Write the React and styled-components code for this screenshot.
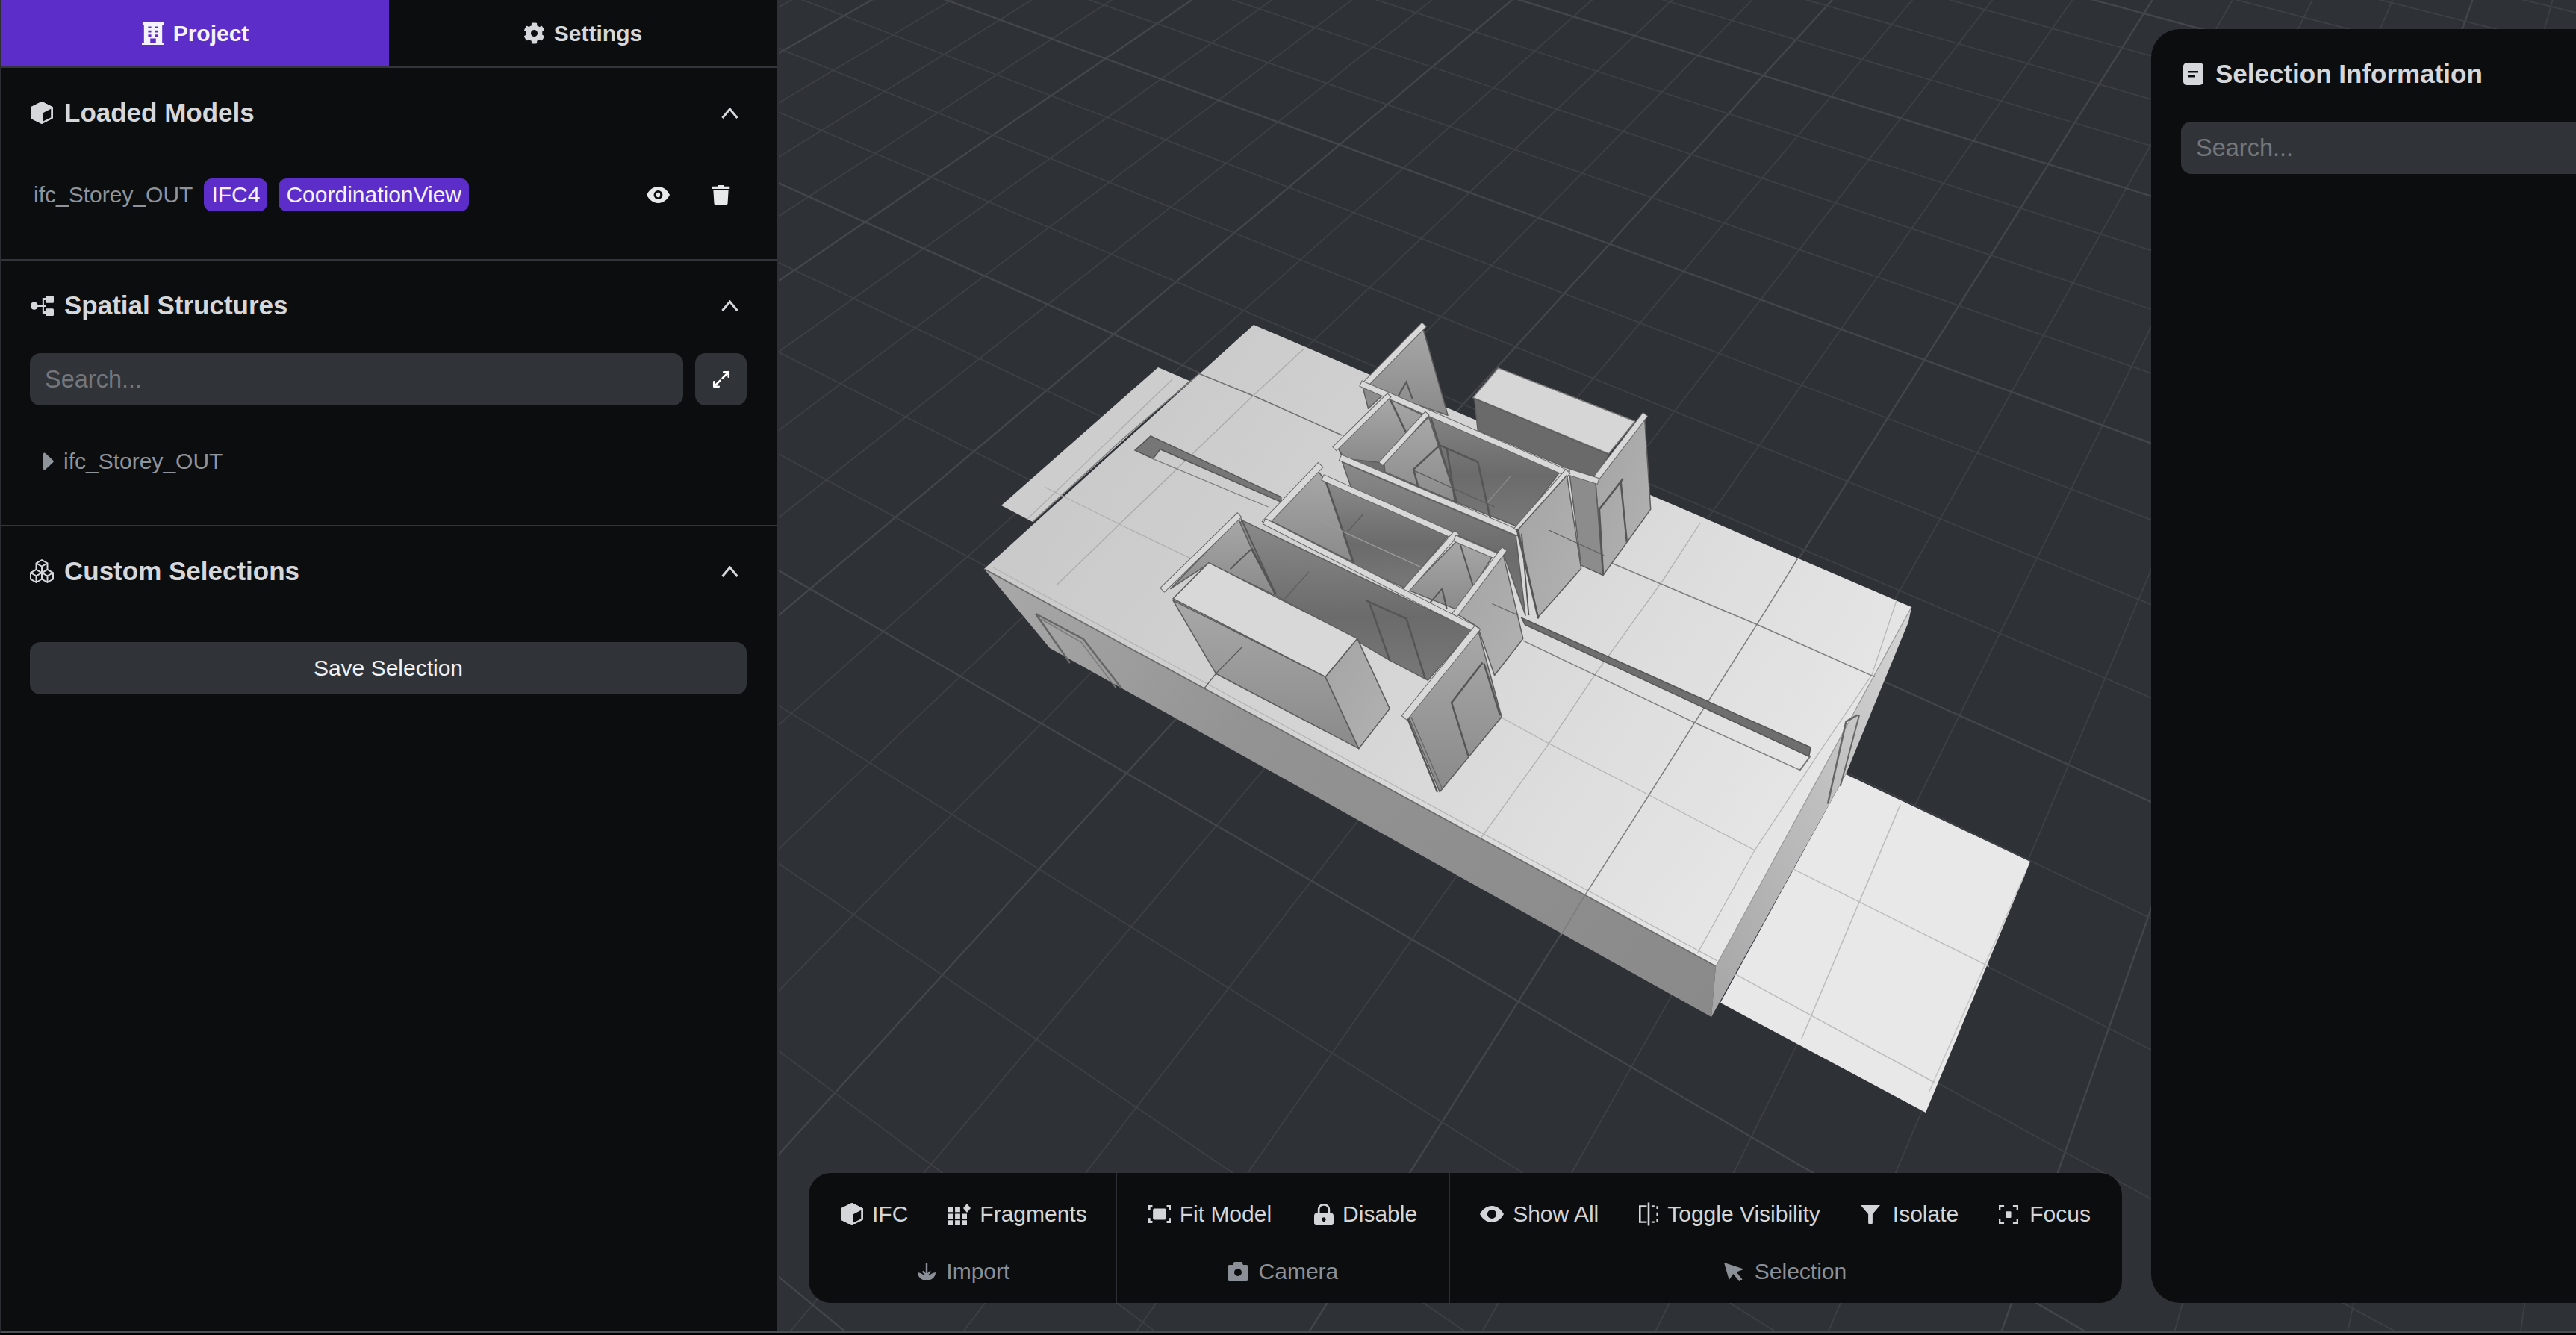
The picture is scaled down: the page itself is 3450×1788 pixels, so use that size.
import React from 'react';
import styled, { createGlobalStyle } from 'styled-components';
import { FaCog, FaTrash } from 'react-icons/fa';
import { BsBoxes } from 'react-icons/bs';

const Global = createGlobalStyle`
  html, body { margin: 0; padding: 0; background: #000; overflow: hidden; }
  * { box-sizing: border-box; }
  input::placeholder { color: #74777c; opacity: 1; }
`;

const Frame = styled.div`
  width: 3450px; height: 1785px; display: flex;
  background: #2e3136; border-bottom: 2px solid #4c4f54; border-left: 2px solid #2c2e33;
  font-family: "Liberation Sans", Arial, sans-serif; font-size: 30px; overflow: hidden;
`;
const Sidebar = styled.aside`
  width: 1041px; flex: none; height: 100%; background: #0c0d0f; border-right: 3px solid #2e3136;
  display: flex; flex-direction: column; position: relative; z-index: 2;
`;
const Tabs = styled.div`display: flex; height: 91px; flex: none; border-bottom: 2px solid #33353b;`;
const Tab = styled.div`
  flex: 1; display: flex; align-items: center; justify-content: center; gap: 12px;
  font-weight: 700; font-size: 30px;
  background: ${p => (p.$active ? '#5c2dc9' : 'transparent')};
  color: ${p => (p.$active ? '#f4f2fb' : '#d5d7da')};
`;
const Section = styled.section`
  padding: 39px 40px ${p => p.$bottom}px 38px;
  border-bottom: ${p => (p.$last ? 'none' : '2px solid #33353b')};
`;
const SectionHeader = styled.div`
  display: flex; align-items: center; height: 42px; color: #d5d7da;
`;
const HeadIcon = styled.span`
  width: 32px; margin-right: 14px; display: flex; align-items: center; justify-content: center; flex: none; color: #d5d7da;
`;
const Title = styled.h2`margin: 0; flex: 1; font-size: 35px; font-weight: 700; line-height: 42px;`;
const Chevron = styled.span`width: 46px; height: 42px; display: flex; align-items: center; justify-content: center; color: #d5d7da;`;
const ModelRow = styled.div`display: flex; align-items: center; height: 44px; margin-top: 67px; padding-left: 5px; gap: 15px;`;
const ModelName = styled.span`color: #8f949b;`;
const Badge = styled.span`
  height: 44px; display: flex; align-items: center; padding: 0 10px; border-radius: 11px;
  background: #5c2dc9; color: #f4f2fb;
`;
const RowActions = styled.div`margin-left: auto; display: flex; gap: 15px;`;
const IconAction = styled.button`
  width: 69px; height: 44px; border: 0; background: transparent; padding: 0; color: #e8e9eb;
  display: flex; align-items: center; justify-content: center;
`;
const SearchRow = styled.div`display: flex; gap: 16px; margin-top: 43px;`;
const SearchInput = styled.input`
  flex: 1; min-width: 0; height: 70px; border: 0; outline: 0; border-radius: 14px; background: #303338;
  padding: 0 20px; font: 32.5px "Liberation Sans", Arial, sans-serif; color: #d5d7da;
`;
const SquareButton = styled.button`
  width: 69px; height: 70px; flex: none; border: 0; padding: 0; border-radius: 14px; background: #303338; color: #fff;
  display: flex; align-items: center; justify-content: center;
`;
const TreeRow = styled.div`display: flex; align-items: center; gap: 13px; height: 40px; margin-top: 55px; padding-left: 17px; color: #8f949b;`;
const SaveButton = styled.button`
  width: 100%; height: 70px; margin-top: 74px; border: 0; border-radius: 14px; background: #303338;
  color: #f0f1f2; font: 30px "Liberation Sans", Arial, sans-serif;
`;
const Viewport = styled.main`flex: 1; position: relative; overflow: hidden; min-width: 0;`;
const Drawing = styled.svg`
  position: absolute; left: 0; top: 0; display: block;
  line, polyline, polygon { vector-effect: non-scaling-stroke; }
`;
const Toolbar = styled.div`
  position: absolute; left: 40px; bottom: 38px; height: 174px; display: flex;
  background: #0c0d0f; border-radius: 30px; overflow: hidden;
`;
const Group = styled.div`
  display: flex; flex-direction: column; align-items: center; padding: 25px ${p => p.$right}px 0 ${p => p.$left}px;
  border-left: ${p => (p.$first ? 'none' : '2px solid #2c2e33')};
`;
const Buttons = styled.div`display: flex; align-items: center; height: 60px; gap: ${p => p.$gap}px;`;
const ToolButton = styled.div`display: flex; align-items: center; gap: ${p => p.$gap || 12}px; color: #d3d5d8; white-space: nowrap;`;
const GroupLabel = styled.div`display: flex; align-items: center; gap: 14px; height: 40px; margin-top: 27px; color: #8b9098;`;
const InfoPanel = styled.aside`
  position: absolute; left: 1838px; top: 39px; bottom: 38px; width: 800px; background: #0c0d0f;
  border-radius: 38px 0 0 38px; padding: 39px 40px;
`;
const InfoInput = styled(SearchInput)`width: 100%; margin-top: 43px; flex: none; display: block;`;
const Glyph = styled.svg`display: block; flex: none;`;

const I = ({ w = 30, h = 30, vb = '0 0 24 24', children }) => (
  <Glyph width={w} height={h} viewBox={vb} fill="currentColor" preserveAspectRatio="none">{children}</Glyph>
);

const BuildingIcon = () => (
  <I w={30} h={30} vb="4 1 16 22.2"><path fillRule="evenodd" d="M4.500 1h15v2.200h-1V21H20v2.200H4V21h1.500V3.200h-1zM8.500 5v2h2.200V5zM13.300 5v2h2.200V5zM8.500 9v2h2.200V9zM13.300 9v2h2.200V9zM8.500 13v2h2.200v-2zM13.300 13v2h2.200v-2zM10 17v4h4v-4z" /></I>
);
const HexIcon = () => (
  <I w={30} h={30} vb="2.300 .9 19.400 22.200">
    <path d="M12 1.800 20.800 6.800V17.200L12 22.200 3.200 17.200V6.800Z" fill="none" stroke="currentColor" strokeWidth="1.800" strokeLinejoin="round" />
    <path d="M3.200 6.800 12 1.800 20.800 6.800 12 12V22.200L3.200 17.200Z" stroke="currentColor" strokeWidth="1.500" strokeLinejoin="round" />
  </I>
);
const ChevronUp = () => (
  <Glyph width="23" height="15" viewBox="0 0 23 15" fill="none" stroke="currentColor" strokeWidth="3"><polyline points="1.500,14 11.500,2 21.500,14" /></Glyph>
);
const EyeIcon = ({ w = 31, h = 22, pupil }) => (
  <I w={w} h={h} vb=".5 3 23 18">
    <path fillRule="evenodd" d="M12 3C6.500 3 2.500 7.500 .5 12 2.500 16.500 6.500 21 12 21s9.500-4.500 11.500-9C21.500 7.500 17.500 3 12 3zM12 7a4.400 5 0 1 1 0 10 4.400 5 0 0 1 0-10z" />
    {pupil && <ellipse cx="12" cy="12" rx="2" ry="2.600" />}
  </I>
);
const TreeIcon = () => (
  <I w={31} h={27} vb=".5 3 22.500 18">
    <circle cx="4" cy="12" r="3.500" />
    <path d="M7 11h5V5h3v2h-1.500v4H15v2h-1.500v4H15v2h-3v-6H7z" />
    <rect x="15" y="3" width="8" height="6.500" rx="1" /><rect x="15" y="14.500" width="8" height="6.500" rx="1" />
  </I>
);
const ExpandIcon = () => (
  <Glyph width="26" height="26" viewBox="0 0 24 24" fill="none" stroke="currentColor" strokeWidth="2.400" strokeLinecap="round" strokeLinejoin="round">
    <path d="M15 3h6v6M21 3l-7.500 7.500M9 21H3v-6M3 21l7.500-7.500" />
  </Glyph>
);
const CaretRight = () => (
  <Glyph width="15" height="24" viewBox="0 0 15 24" fill="currentColor"><path d="M1 2.500C1 .5 2.800 0 4 1.200L14 10.500c1 1 1 2 0 3L4 22.800C2.800 24 1 23.500 1 21.500z" /></Glyph>
);
const FragmentsIcon = () => (
  <I w={30} h={29} vb="2 1.500 19.800 19.500">
    <path d="M2 4.500h4.500v4.500H2zM8 4.500h4.500v4.500H8zM2 10.500h4.500V15H2zM8 10.500h4.500V15H8zM14 10.500h4.500V15H14zM2 16.500h4.500V21H2zM8 16.500h4.500V21H8zM14 16.500h4.500V21H14z" />
    <path d="M18.500 1.500 21.800 5.500 18.500 9.500 15.200 5.500z" />
  </I>
);
const FitIcon = () => (
  <Glyph width="30" height="24" viewBox="1 4 22 16" preserveAspectRatio="none" fill="none" stroke="currentColor" strokeWidth="2">
    <path d="M5 5H2v3.500M19 5h3v3.500M5 19H2v-3.500M19 19h3v-3.500" />
    <rect x="5.500" y="7" width="13" height="10" rx="1.500" fill="currentColor" stroke="none" />
  </Glyph>
);
const LockIcon = () => (
  <I w={26} h={29} vb="2.500 1.500 19 21.500">
    <path fillRule="evenodd" d="M12 1.500c-3.500 0-6 2.500-6 6V11H5a2.500 2.500 0 0 0-2.500 2.500v7A2.500 2.500 0 0 0 5 23h14a2.500 2.500 0 0 0 2.500-2.500v-7A2.500 2.500 0 0 0 19 11h-1V7.500c0-3.500-2.500-6-6-6zM8 11V7.500c0-2.500 1.500-4 4-4s4 1.500 4 4V11zM12 15a2 2 0 0 1 1 3.700V20h-2v-1.300A2 2 0 0 1 12 15z" />
  </I>
);
const ToggleIcon = () => (
  <Glyph width="26" height="32" viewBox="2 .5 20 27" preserveAspectRatio="none" fill="none" stroke="currentColor" strokeWidth="2">
    <path d="M10 5H3v18h7M12 1v26" />
    <path d="M15 5h3M21 5v3M21 12v4M21 20v3M15 23h3" />
  </Glyph>
);
const FunnelIcon = () => (
  <I w={26} h={25} vb=".8 2.500 22.400 21"><path d="M.8 2.500h22.400L14.500 12.500V22.500c0 .8-.5 1-1.200 1h-2.600c-.7 0-1.200-.2-1.200-1V12.500z" /></I>
);
const FocusIcon = () => (
  <Glyph width="26" height="25" viewBox="1 2 22 20" preserveAspectRatio="none" fill="none" stroke="currentColor" strokeWidth="2">
    <path d="M7 3H2v4.500M17 3h5v4.500M7 21H2v-4.500M17 21h5v-4.500" />
    <rect x="9" y="8.500" width="6" height="7" rx="1" fill="currentColor" stroke="none" />
  </Glyph>
);
const ImportIcon = () => (
  <I w={24} h={24} vb="2 1 20 22">
    <path d="M2 13c2.500.5 5 1.500 7 3.500h6c2-2 4.500-3 7-3.500 0 5.500-4 10-10 10S2 18.500 2 13z" />
    <path d="M12 1v15M7.500 11.500 12 16.500l4.500-5" fill="none" stroke="currentColor" strokeWidth="2" />
  </I>
);
const CameraIcon = () => (
  <I w={28} h={26} vb="0 0 28 26">
    <path fillRule="evenodd" d="M9 0h10l2 4h4a3 3 0 0 1 3 3v16a3 3 0 0 1-3 3H3a3 3 0 0 1-3-3V7a3 3 0 0 1 3-3h4zM14 9a5 5 0 1 0 0 10 5 5 0 0 0 0-10z" />
  </I>
);
const CursorIcon = () => (
  <I w={27} h={25} vb="1 1 22 24"><path d="M1 1 23 9.500 14.500 13 21 22.500 17.500 25 11 15.500 6.500 23z" /></I>
);
const NoteIcon = () => (
  <I w={27} h={30} vb="0 0 27 30">
    <path fillRule="evenodd" d="M5 0h17a5 5 0 0 1 5 5v20a5 5 0 0 1-5 5H5a5 5 0 0 1-5-5V5a5 5 0 0 1 5-5zM7 11v2.500h13V11zM7 17v2.500h9V17z" />
  </I>
);

/* ---------- the ground grid, fitted from measured intersections ---------- */
const samples = [
  [2, 0, 1480, 77.7], [8, 0, 1970, 258.7], [1, 4, 1083.4, 263.3], [6, 4, 1491.5, 447], [4, 6, 1126, 515],
  [6, 8, 1084.9, 788.1], [8, 9, 1165, 1021], [10, 10, 1262, 1305.8], [12, 10, 1522, 1483], [10, 11, 1117.6, 1464.7],
  [12, 9, 1645.6, 1322.8], [14, -4, 2744.6, 219.4], [16, 0, 2816, 569], [16, 2, 2728, 747.4], [10, -4, 2359.8, 102],
  [14, 0, 2577.7, 482], [14, 3, 2415, 737],
];
function fit() {
  const n = 8;
  const A = Array.from({ length: n }, () => new Array(n + 1).fill(0));
  const add = (row, b) => {
    for (let r = 0; r < n; r++) {
      for (let c = 0; c < n; c++) A[r][c] += row[r] * row[c];
      A[r][n] += row[r] * b;
    }
  };
  samples.forEach(([i, j, X, Y]) => {
    const x = X / 1000, y = Y / 1000;
    add([i, j, 1, 0, 0, 0, -i * x, -j * x], x);
    add([0, 0, 0, i, j, 1, -i * y, -j * y], y);
  });
  for (let c = 0; c < n; c++) {
    let p = c;
    for (let r = c + 1; r < n; r++) if (Math.abs(A[r][c]) > Math.abs(A[p][c])) p = r;
    [A[c], A[p]] = [A[p], A[c]];
    for (let r = 0; r < n; r++) {
      if (r === c) continue;
      const f = A[r][c] / A[c][c];
      for (let k = c; k <= n; k++) A[r][k] -= f * A[c][k];
    }
  }
  return A.map((row, r) => row[n] / row[r]);
}
const H = fit();
const project = (i, j) => {
  const w = H[6] * i + H[7] * j + 1;
  return { w, x: ((H[0] * i + H[1] * j + H[2]) / w) * 1000, y: ((H[3] * i + H[4] * j + H[5]) / w) * 1000 };
};
function gridLines() {
  const out = [];
  const span = (fn, major, key) => {
    const pts = [];
    for (let t = -60; t <= 80; t++) {
      const p = fn(t);
      if (p.w > 0.12) pts.push(p);
    }
    if (pts.length > 1) {
      const a = pts[0], b = pts[pts.length - 1];
      out.push(<line key={key} x1={a.x} y1={a.y} x2={b.x} y2={b.y} stroke={major ? '#43464a' : '#3d4045'} strokeWidth={major ? 2.4 : 1.8} />);
    }
  };
  for (let i = -40; i <= 60; i++) span(t => project(i, t), ((i % 4) + 4) % 4 === 2, `c${i}`);
  for (let j = -50; j <= 60; j++) span(t => project(t, j), ((j % 4) + 4) % 4 === 0, `r${j}`);
  return out;
}

/* ---------- the model ---------- */
const Z6 = ({ children }) => <g transform="translate(1300 400) scale(0.63776 0.44643)">{children}</g>;
const Z7 = ({ children }) => <g transform="translate(1600 700) scale(0.76531 0.5102)">{children}</g>;
const Face = ({ p, fill, edge = '#5e5e5e' }) => <polygon points={p} fill={fill} stroke={edge} strokeWidth="1.500" strokeLinejoin="round" />;
const Strip = ({ p, w = 7 }) => (
  <g fill="none" strokeLinecap="square">
    <polyline points={p} stroke="#666666" strokeWidth={w + 2} />
    <polyline points={p} stroke="#d8d8d8" strokeWidth={w} />
  </g>
);
const Ink = ({ p, w = 2, c = '#505050' }) => <polyline points={p} fill="none" stroke={c} strokeWidth={w} />;

const Model = () => (
  <g>
    <defs>
      <linearGradient id="slab" gradientUnits="userSpaceOnUse" x1="1400" y1="550" x2="2400" y2="1250">
        <stop offset="0" stopColor="#c8c8c8" /><stop offset="0.5" stopColor="#d6d6d6" /><stop offset="1" stopColor="#e8e8e8" />
      </linearGradient>
      <linearGradient id="front" gradientUnits="userSpaceOnUse" x1="1318" y1="800" x2="2295" y2="1340">
        <stop offset="0" stopColor="#a8a8a8" /><stop offset="0.35" stopColor="#939393" /><stop offset="1" stopColor="#8a8a8a" />
      </linearGradient>
      <linearGradient id="side" x1="1" y1="0" x2="0" y2="1">
        <stop offset="0" stopColor="#d4d4d4" /><stop offset="1" stopColor="#a6a6a6" />
      </linearGradient>
      <linearGradient id="dark" x1="0" y1="0" x2="0" y2="1">
        <stop offset="0" stopColor="#8a8a8a" /><stop offset="0.6" stopColor="#6b6b6b" /><stop offset="1" stopColor="#787878" />
      </linearGradient>
      <linearGradient id="mid" x1="0" y1="0" x2="0" y2="1">
        <stop offset="0" stopColor="#a8a8a8" /><stop offset="1" stopColor="#8a8a8a" />
      </linearGradient>
      <linearGradient id="light" x1="0" y1="0" x2="1" y2="1">
        <stop offset="0" stopColor="#a4a4a4" /><stop offset="1" stopColor="#b2b2b2" />
      </linearGradient>
    </defs>

    {/* lower terrace */}
    <polygon points="2472,1037 2719,1154 2579,1490 2304,1343" fill="#e8e8e8" />
    <Z7>
      <Ink p="1235,740 1062,1355" c="#bcbcbc" w={1.500} /><Ink p="1452,925 1285,1495" c="#c4c4c4" w={1.500} />
      <Ink p="1035,900 1390,1165" c="#bcbcbc" w={1.500} /><Ink p="925,1168 1295,1470" c="#bcbcbc" w={1.500} />
    </Z7>
    {/* left strip and main slab */}
    <polygon points="1551,492 1341,677 1383,699 1593,510" fill="#cdcdcd" />
    <polygon points="1679,435 1318,762 2298,1294 2560,813" fill="url(#slab)" />
    {/* outer walls */}
    <polygon points="1318,762 2298,1294 2292,1362 1406,868" fill="url(#front)" />
    <polygon points="2298,1294 2560,813 2556,833 2472,1037 2292,1362" fill="url(#side)" />
    <Ink p="1318,762 2298,1294" w={1.800} c="#6c6c6c" />
    <Ink p="1330,760 2300,1287" w={1.200} c="#b4b4b4" />
    <Ink p="2298,1294 2560,813" w={1.200} c="#9c9c9c" />
    <Ink p="1387,822 1451,856 1502,922" w={2.500} c="#666666" />
    <Ink p="1387,822 1433,888" w={2.500} c="#666666" />
    <Ink p="1394,829 1448,860 1495,922" w={1.500} c="#7c7c7c" />
    <Z7>
      <Ink p="1160,505 1140,522 1108,738" w={2.500} c="#666666" /><Ink p="1163,505 1130,692" w={2} c="#666666" />
      {/* floor joints */}
      <Ink p="1055,95 985,265 875,525 795,715 680,985 640,1085" w={1.500} c="#7c7c7c" />
      <Ink p="885,0 820,150 700,400 620,580 500,830" c="#b0b0b0" w={1.300} />
      <Ink p="1228,205 1185,400 1090,610 980,860 880,1130" c="#b6b6b6" w={1.300} />
      <Ink p="720,100 985,268 1190,405" w={1.500} c="#7c7c7c" />
      <Ink p="575,310 875,525 1060,650" w={1.500} c="#7c7c7c" />
      <Ink p="535,510 620,580 795,715 980,860" c="#b6b6b6" w={1.300} />
      <polygon points="572,250 1078,590 1075,614 578,268" fill="#6e6e6e" stroke="#555555" strokeWidth="1.500" />
      <Ink p="1078,612 1058,652" c="#777777" />
    </Z7>
    <Z6>
      {/* slab joints, top left */}
      <Ink p="480,225 600,295 780,410" c="#6e6e6e" w={1.500} />
      <Ink p="480,225 320,420 130,670" c="#7c7c7c" w={1.500} />
      <Ink p="700,150 590,295 310,680 180,860" c="#aaaaaa" w={1.300} />
      <Ink p="425,240 120,660" c="#acacac" w={1.300} />
      <Ink p="155,565 320,682 470,785" c="#b0b0b0" w={1.300} />
      <polygon points="378,412 652,595 652,610 398,452 383,480 345,455" fill="#767676" stroke="#555555" strokeWidth="1.500" />
      <Ink p="382,480 625,625" c="#7c7c7c" w={1.300} />

      {/* right block */}
      <Face p="1108,208 1055,297 1340,465 1395,368" fill="#d6d6d6" edge="#7a7a7a" />
      <Face p="1058,300 1340,468 1312,535 1255,510 1065,395" fill="#6a6a6a" />
      <Face p="1415,352 1428,632 1328,830 1312,548" fill="url(#light)" />
      <Face p="1258,530 1312,548 1328,830 1282,800" fill="#8c8c8c" />
      <Ink p="1370,540 1320,632 1328,825" w={2.500} c="#555555" /><Ink p="1365,548 1378,730" w={2.500} c="#555555" />
      <Strip p="1413,354 1312,542" /><Strip p="1245,515 1312,545" />

      {/* spike wall */}
      <Face p="948,80 1002,350 880,290 835,255" fill="url(#mid)" />
      <Face p="822,258 865,290 835,330" fill="#8c8c8c" />
      <Ink p="898,292 915,250 928,302" w={2.200} c="#5a5a5a" />
      <Strip p="948,84 828,258" />

      {/* upper rooms */}
      <Face p="875,295 1240,515 1150,685 780,475 770,440" fill="url(#dark)" />
      <Face p="875,298 770,445 785,480 862,492 950,350" fill="url(#mid)" />
      <Face p="962,355 868,490 870,520 1022,612" fill="url(#mid)" />
      <Ink p="880,300 918,412" w={2.500} c="#555555" /><Ink p="966,355 1022,612" w={2.200} c="#555555" />
      <Ink p="985,440 930,512 945,592" w={2.500} c="#555555" /><Ink p="985,440 1065,490 1092,665" w={2.500} c="#555555" />
      <Ink p="1000,450 1018,615" w={2.500} c="#555555" />
      <Ink p="1135,530 1085,612" w={1.300} c="#8c8c8c" /><Ink p="930,515 1100,625" w={1.300} c="#5c5c5c" />
      <Face p="780,490 1145,712 1165,950 1120,770 1030,715 800,570" fill="url(#dark)" />
      <Strip p="825,258 1250,522" /><Strip p="955,350 865,490" w={6} /><Strip p="875,295 768,445" w={6} />
      <Strip p="782,480 1145,700" /><Strip p="1250,525 1150,688" />

      {/* wall right of the corridor */}
      <Face p="1150,692 1252,530 1282,810 1192,955" fill="url(#light)" />
      <Ink p="1147,690 1192,960" w={2.500} c="#555555" /><Ink p="1157,705 1172,950" w={1.800} c="#555555" />
      <Ink p="1215,695 1330,770" w={1.300} c="#5e5e5e" />

      {/* lower middle room */}
      <Face p="745,545 1005,708 912,868 812,805 625,680" fill="url(#dark)" />
      <Face p="725,510 628,665 802,790 745,545" fill="url(#mid)" />
      <Ink p="745,545 805,795" w={2.500} c="#555555" /><Ink p="825,645 785,710" w={1.300} c="#5e5e5e" />
      <Ink p="715,655 945,805" w={1.300} c="#9a9a9a" />
      <Strip p="730,506 622,668" w={8} /><Strip p="745,540 1005,705" />
      <Face p="1022,725 1095,775 1025,935 920,875" fill="url(#mid)" />
      <Ink p="1025,722 1055,862" w={2} c="#555555" />
      <Ink p="990,870 965,912" w={1.800} c="#555555" /><Ink p="990,870 1000,932" w={2.200} c="#555555" />
      <Strip p="1017,708 917,870" /><Strip p="1022,722 1100,770" />
      <Face p="1117,760 1160,1020 1100,1130 1065,985 1020,945" fill="url(#light)" />
      <Ink p="1095,915 1150,950" w={1.300} c="#666666" />
      <Strip p="1117,758 1020,942" />

      {/* lower big room */}
      <Face p="570,665 1052,995 960,1145 880,1085 815,1030 640,890 500,795" fill="url(#dark)" />
      <Face p="562,660 420,870 500,795 640,890 590,750" fill="url(#mid)" />
      <Ink p="590,750 545,812" w={1.800} c="#555555" /><Ink p="590,750 640,885" w={3} c="#555555" />
      <Ink p="568,660 640,885" w={1.800} c="#555555" />
      <Ink p="830,905 915,960 955,1142" w={2.500} c="#555555" /><Ink p="838,915 880,1085" w={2.500} c="#555555" />
      <Ink p="710,820 660,900" w={1.300} c="#5e5e5e" />
      <Strip p="622,672 1060,992" /><Strip p="560,655 407,868" />

      {/* near block */}
      <Face p="500,792 425,900 745,1135 812,1020" fill="#d8d8d8" edge="#5c5c5c" />
      <Face p="425,905 745,1135 815,1350 515,1125" fill="url(#mid)" edge="#5c5c5c" />
      <Face p="745,1135 812,1020 880,1230 815,1350" fill="url(#light)" edge="#5c5c5c" />
      <Ink p="570,1045 515,1125 490,1170" w={1.300} c="#5e5e5e" />

      {/* near wall */}
      <Face p="1065,990 1115,1255 985,1480 918,1250" fill="url(#mid)" />
      <Ink p="1075,1092 1010,1212 1045,1372" w={2.500} c="#555555" /><Ink p="1078,1095 1112,1250" w={2.500} c="#555555" />
      <Ink p="915,1250 980,1480" w={2.500} c="#555555" /><Ink p="925,1255 990,1470" w={1.300} c="#666666" />
      <Strip p="1060,995 915,1250" w={8} />
    </Z6>
  </g>
);

const Scene = () => (
  <Drawing width="2407" height="1783" viewBox="1043 0 2407 1783">
    {gridLines()}
    <Model />
  </Drawing>
);

export default function App() {
  return (
    <>
      <Global />
      <Frame>
        <Sidebar>
          <Tabs>
            <Tab $active><BuildingIcon />Project</Tab>
            <Tab><FaCog size={29} />Settings</Tab>
          </Tabs>
          <Section $bottom={64}>
            <SectionHeader>
              <HeadIcon><HexIcon /></HeadIcon>
              <Title>Loaded Models</Title>
              <Chevron><ChevronUp /></Chevron>
            </SectionHeader>
            <ModelRow>
              <ModelName>ifc_Storey_OUT</ModelName>
              <Badge>IFC4</Badge>
              <Badge>CoordinationView</Badge>
              <RowActions>
                <IconAction><EyeIcon pupil /></IconAction>
                <IconAction><FaTrash size={27} /></IconAction>
              </RowActions>
            </ModelRow>
          </Section>
          <Section $bottom={65}>
            <SectionHeader>
              <HeadIcon><TreeIcon /></HeadIcon>
              <Title>Spatial Structures</Title>
              <Chevron><ChevronUp /></Chevron>
            </SectionHeader>
            <SearchRow>
              <SearchInput placeholder="Search..." />
              <SquareButton><ExpandIcon /></SquareButton>
            </SearchRow>
            <TreeRow><CaretRight />ifc_Storey_OUT</TreeRow>
          </Section>
          <Section $bottom={0} $last>
            <SectionHeader>
              <HeadIcon><BsBoxes size={32} /></HeadIcon>
              <Title>Custom Selections</Title>
              <Chevron><ChevronUp /></Chevron>
            </SectionHeader>
            <SaveButton>Save Selection</SaveButton>
          </Section>
        </Sidebar>
        <Viewport>
          <Scene />
          <Toolbar>
            <Group $first $left={43} $right={38}>
              <Buttons $gap={54}>
                <ToolButton><HexIcon /><span>IFC</span></ToolButton>
                <ToolButton><FragmentsIcon /><span>Fragments</span></ToolButton>
              </Buttons>
              <GroupLabel><ImportIcon />Import</GroupLabel>
            </Group>
            <Group $left={42} $right={42}>
              <Buttons $gap={57}>
                <ToolButton><FitIcon /><span>Fit Model</span></ToolButton>
                <ToolButton><LockIcon /><span>Disable</span></ToolButton>
              </Buttons>
              <GroupLabel><CameraIcon />Camera</GroupLabel>
            </Group>
            <Group $left={40} $right={42}>
              <Buttons $gap={54}>
                <ToolButton><EyeIcon w={32} h={22} /><span>Show All</span></ToolButton>
                <ToolButton><ToggleIcon /><span>Toggle Visibility</span></ToolButton>
                <ToolButton $gap={17}><FunnelIcon /><span>Isolate</span></ToolButton>
                <ToolButton $gap={15}><FocusIcon /><span>Focus</span></ToolButton>
              </Buttons>
              <GroupLabel><CursorIcon />Selection</GroupLabel>
            </Group>
          </Toolbar>
          <InfoPanel>
            <SectionHeader>
              <HeadIcon><NoteIcon /></HeadIcon>
              <Title>Selection Information</Title>
            </SectionHeader>
            <InfoInput placeholder="Search..." />
          </InfoPanel>
        </Viewport>
      </Frame>
    </>
  );
}
